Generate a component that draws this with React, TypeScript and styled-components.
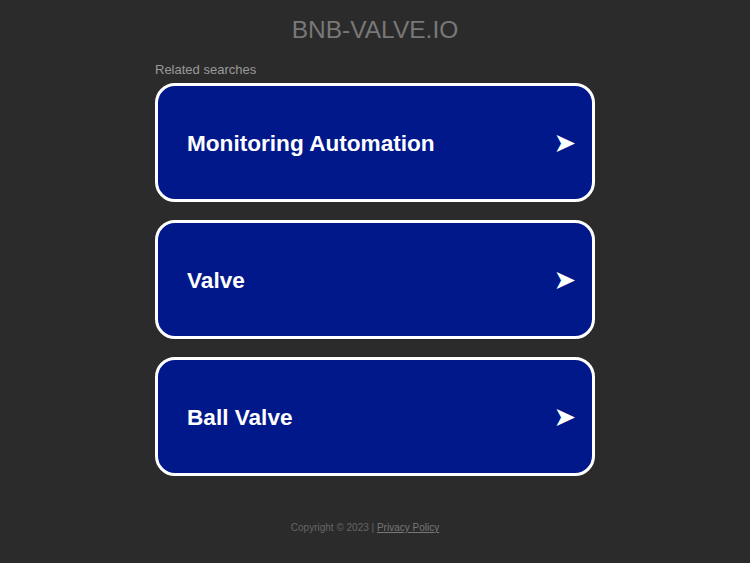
import styled, { createGlobalStyle } from "styled-components";

const GlobalStyle = createGlobalStyle`
  html, body {
    margin: 0;
    padding: 0;
    background-color: #2b2b2b;
    font-family: "Liberation Sans", Arial, sans-serif;
  }
`;

const Page = styled.div`
  width: 750px;
  min-height: 563px;
  display: flex;
  flex-direction: column;
  align-items: center;
`;

const Domain = styled.h1`
  margin: 16px 0 0;
  font-size: 24.5px;
  font-weight: normal;
  color: #787878;
  line-height: 28px;
`;

const Content = styled.div`
  width: 440px;
  margin-top: 18px;
`;

const Caption = styled.div`
  font-size: 13px;
  color: #9a9a9a;
  line-height: 15px;
  margin-bottom: 6px;
`;

const List = styled.div`
  display: flex;
  flex-direction: column;
  gap: 18px;
`;

const Card = styled.a`
  box-sizing: border-box;
  height: 119px;
  display: flex;
  align-items: center;
  justify-content: space-between;
  padding: 3px 16px 0 29px;
  background-color: #00188a;
  border: 3px solid #ffffff;
  border-radius: 20px;
  color: #ffffff;
  text-decoration: none;
  font-size: 22.6px;
  font-weight: bold;
`;

const Arrow = styled.span`
  font-family: "DejaVu Sans", sans-serif;
  font-size: 27px;
  font-weight: normal;
  line-height: 1;
  margin-bottom: 4px;
`;

const Footer = styled.div`
  margin: 46px 20px 0 0;
  font-size: 10px;
  color: #666666;

  a {
    color: #777777;
    text-decoration: underline;
  }
`;

const searches = ["Monitoring Automation", "Valve", "Ball Valve"];

const App = () => {
  return (
    <Page>
      <GlobalStyle />
      <Domain>BNB-VALVE.IO</Domain>
      <Content>
        <Caption>Related searches</Caption>
        <List>
          {searches.map((label) => (
            <Card key={label} href="#">
              <span>{label}</span>
              <Arrow>➤</Arrow>
            </Card>
          ))}
        </List>
      </Content>
      <Footer>
        Copyright © 2023 | <a href="#">Privacy Policy</a>
      </Footer>
    </Page>
  );
};

export default App;
